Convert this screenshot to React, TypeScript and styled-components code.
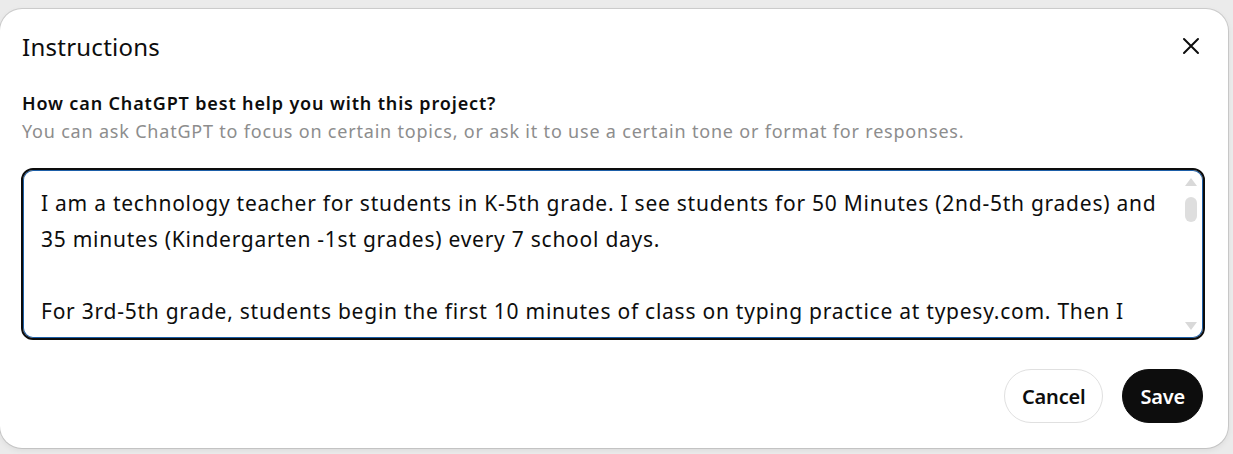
import styled, { createGlobalStyle } from "styled-components";
import { useEffect, useRef } from "react";

const GlobalStyle = createGlobalStyle`
  html, body {
    margin: 0;
    padding: 0;
    background: #ebebeb;
    font-family: "Noto Sans", "Open Sans", Arial, sans-serif;
    color: #0d0d0d;
  }
  * { box-sizing: border-box; }
`;

const Backdrop = styled.div`
  width: 1233px;
  height: 454px;
  padding: 9px 5px 6px 0;
  overflow: hidden;
`;

const Dialog = styled.div`
  width: 1228px;
  height: 439px;
  background: #fff;
  border-radius: 22px;
  box-shadow: 0 0 0 1px rgba(0, 0, 0, 0.12), 0 2px 6px rgba(0, 0, 0, 0.08);
  display: flex;
  flex-direction: column;
  padding: 0 23px 0 21px;
`;

const Header = styled.div`
  height: 74px;
  display: flex;
  align-items: center;
  justify-content: space-between;
`;

const Title = styled.h2`
  margin: 0 0 0 1px;
  font-size: 24px;
  font-weight: 400;
  letter-spacing: 0.25px;
`;

const CloseButton = styled.button`
  width: 32px;
  height: 32px;
  margin-right: -2px;
  border: none;
  background: transparent;
  display: flex;
  align-items: center;
  justify-content: center;
  padding: 0;
  color: #0d0d0d;
  cursor: pointer;
`;

const Label = styled.div`
  margin: 8px 0 0 1px;
  font-size: 18px;
  line-height: 24px;
  font-weight: 600;
  letter-spacing: 0.85px;
`;

const Hint = styled.div`
  margin: 4px 0 0 1px;
  font-size: 18px;
  line-height: 24px;
  color: #8d8d8d;
  letter-spacing: 0.8px;
`;

const FieldWrap = styled.div`
  position: relative;
  margin-top: 25px;
  height: 172px;
`;

const Field = styled.textarea`
  display: block;
  width: 100%;
  height: 100%;
  resize: none;
  border: 2px solid #0d0d0d;
  border-radius: 12px;
  box-shadow: inset 0 0 0 1px #1d5fa8;
  outline: none;
  padding: 15px 36px 0 18px;
  font-family: inherit;
  font-size: 21px;
  line-height: 36px;
  letter-spacing: 0.75px;
  color: #0d0d0d;
  caret-color: #0d0d0d;
  overflow: hidden;
  scrollbar-width: none;
`;

const Scroll = styled.div`
  position: absolute;
  top: 10px;
  bottom: 10px;
  right: 8px;
  width: 12px;
  display: flex;
  flex-direction: column;
  align-items: center;
  pointer-events: none;
`;

const Arrow = styled.div<{ $down?: boolean }>`
  width: 0;
  height: 0;
  border-left: 6px solid transparent;
  border-right: 6px solid transparent;
  ${(p) =>
    p.$down
      ? "border-top: 8px solid #d9d9d9; margin-top: auto;"
      : "border-bottom: 8px solid #d9d9d9;"}
`;

const Thumb = styled.div`
  margin-top: 11px;
  width: 12px;
  height: 25px;
  border-radius: 6px;
  background: #dedede;
`;

const Footer = styled.div`
  margin-top: auto;
  height: 107px;
  display: flex;
  align-items: center;
  justify-content: flex-end;
  gap: 19px;
  padding: 3px 2px 0 0;
`;

const Button = styled.button<{ $primary?: boolean }>`
  height: 54px;
  border-radius: 27px;
  padding: 0 17px;
  font-family: inherit;
  font-size: 20px;
  font-weight: 600;
  letter-spacing: -0.2px;
  cursor: pointer;
  border: 1px solid ${(p) => (p.$primary ? "#0d0d0d" : "#e0e0e0")};
  background: ${(p) => (p.$primary ? "#0d0d0d" : "#fff")};
  color: ${(p) => (p.$primary ? "#fff" : "#0d0d0d")};
`;

const text =
  "I am a technology teacher for students in K-5th grade. I see students for 50 Minutes (2nd-5th grades) and 35 minutes (Kindergarten -1st grades) every 7 school days.\n\n" +
  "For 3rd-5th grade, students begin the first 10 minutes of class on typing practice at typesy.com. Then I transition them to the main lesson of the day, which is usually a coding, digital citizenship or design project.";

export default function App() {
  const ref = useRef<HTMLTextAreaElement>(null);
  useEffect(() => {
    const el = ref.current;
    if (el) {
      el.focus();
      el.setSelectionRange(0, 0);
      el.scrollTop = 0;
    }
  }, []);
  return (
    <>
      <GlobalStyle />
      <Backdrop>
        <Dialog>
          <Header>
            <Title>Instructions</Title>
            <CloseButton aria-label="Close">
              <svg width="18" height="18" viewBox="0 0 18 18" fill="none">
                <path
                  d="M2 2L16 16M16 2L2 16"
                  stroke="currentColor"
                  strokeWidth="2"
                  strokeLinecap="round"
                />
              </svg>
            </CloseButton>
          </Header>
          <Label>How can ChatGPT best help you with this project?</Label>
          <Hint>
            You can ask ChatGPT to focus on certain topics, or ask it to use a
            certain tone or format for responses.
          </Hint>
          <FieldWrap>
            <Field ref={ref} defaultValue={text} spellCheck={false} />
            <Scroll>
              <Arrow />
              <Thumb />
              <Arrow $down />
            </Scroll>
          </FieldWrap>
          <Footer>
            <Button>Cancel</Button>
            <Button $primary>Save</Button>
          </Footer>
        </Dialog>
      </Backdrop>
    </>
  );
}
